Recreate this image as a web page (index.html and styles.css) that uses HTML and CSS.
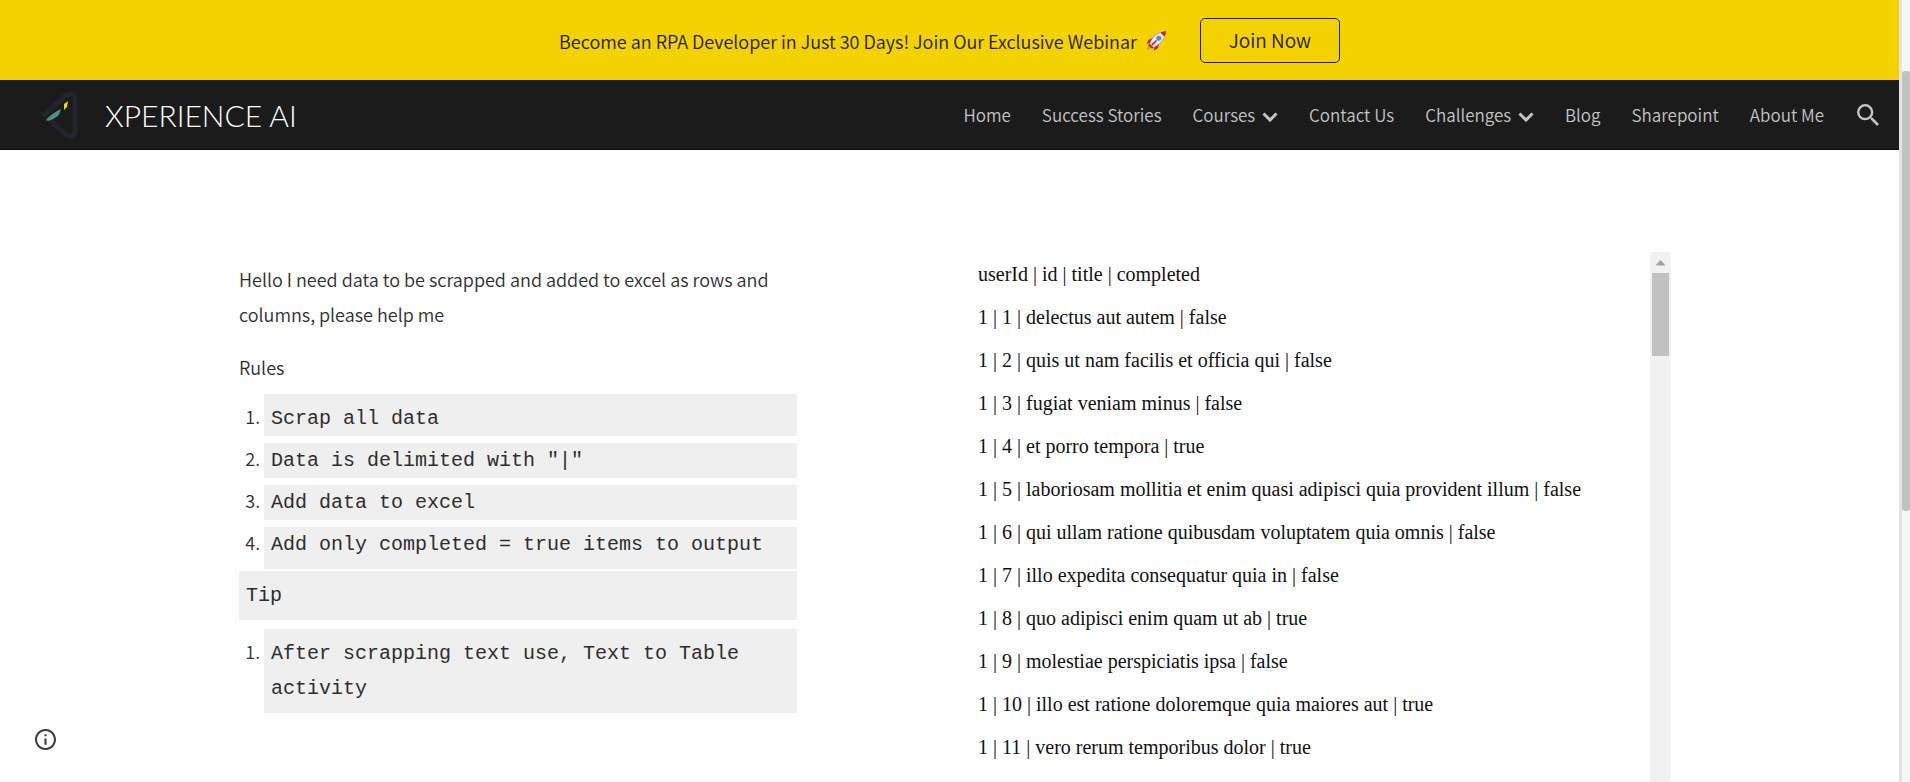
FILE: index.html
```html
<!DOCTYPE html>
<html lang="en">
<head>
<meta charset="utf-8">
<title>Xperience AI</title>
<link rel="stylesheet" href="styles.css">
</head>
<body>
<div class="page">
  <div class="banner">
    <p class="banner-text">Become an RPA Developer in Just 30 Days! Join Our Exclusive Webinar
      <svg class="rocket" viewBox="0 0 24 24" aria-hidden="true">
        <path fill="#d3193f" d="M10 8 4 10.500 1.500 15l5-1zM16 14l-2 6-4.500 2.500 1-5z"/>
        <path fill="#f08a1d" d="M5 15 1.500 22l7-3.500z"/>
        <path fill="#e8edf5" stroke="#8290a8" stroke-width=".7" d="M5 15C7 9 13 3 19 2.500l2.500 2.500C21 11 15 17 9 19z"/>
        <path fill="#d3193f" d="M17 3q3.500-1.800 6-2-.2 3-2 6z"/>
        <path fill="#c2184b" d="M4.500 14.500l5 5-2 .8L3.700 16.500z"/>
        <circle cx="15" cy="9" r="2.500" fill="#4f8fd0" stroke="#70809a" stroke-width=".7"/>
        <path stroke="#d3193f" stroke-width="1.800" stroke-linecap="round" d="m8 16 4-4"/>
      </svg>
    </p>
    <button class="join" type="button">Join Now</button>
  </div>

  <header class="header">
    <a class="brand" href="#">
      <svg class="logo" viewBox="-1 -1 44 52" aria-hidden="true">
        <path fill="none" stroke="#22252e" stroke-width="5" stroke-linejoin="round" d="M4 26 25 7Q35 0 36 9v32q-1 8-9 4L12 31"/>
        <path fill="#4d8f8f" d="M7 30q5-6 13-10l2-1-2 6q-6 5-11 6z"/>
        <path fill="#f2d51b" d="m25 14 4-3-1 6-3 3z"/>
      </svg>
      <span class="brand-name">XPERIENCE AI</span>
    </a>
    <nav class="nav">
      <a href="#">Home</a>
      <a href="#">Success Stories</a>
      <a href="#">Courses <svg class="chevron" viewBox="0 0 16 10" aria-hidden="true"><path d="m1.500 1.500 6.500 6.500 6.500-6.500"/></svg></a>
      <a href="#">Contact Us</a>
      <a href="#">Challenges <svg class="chevron" viewBox="0 0 16 10" aria-hidden="true"><path d="m1.500 1.500 6.500 6.500 6.500-6.500"/></svg></a>
      <a href="#">Blog</a>
      <a href="#">Sharepoint</a>
      <a href="#">About Me</a>
      <button class="search" type="button" aria-label="Search">
        <svg viewBox="3 3 17.500 17.500" aria-hidden="true"><path d="M15.500 14h-.79l-.28-.27A6.470 6.470 0 0 0 16 9.500 6.500 6.500 0 1 0 9.500 16c1.610 0 3.090-.59 4.230-1.570l.27.28v.79l5 4.990L20.490 19l-4.990-5zm-6 0C7.010 14 5 11.990 5 9.500S7.010 5 9.500 5 14 7.010 14 9.500 11.990 14 9.500 14z"/></svg>
      </button>
    </nav>
  </header>

  <main class="content">
    <section class="brief">
      <p>Hello I need data to be scrapped and added to excel as rows and columns, please help me</p>
      <p>Rules</p>
      <ol class="steps">
        <li><code>Scrap all data</code></li>
        <li><code>Data is delimited with "|"</code></li>
        <li><code>Add data to excel</code></li>
        <li><code>Add only completed = true items to output</code></li>
      </ol>
      <code class="tip">Tip</code>
      <ol class="steps">
        <li><code>After scrapping text use, Text to Table activity</code></li>
      </ol>
    </section>

    <section class="data">
      <div class="rows">
        <p>userId | id | title | completed</p>
        <p>1 | 1 | delectus aut autem | false</p>
        <p>1 | 2 | quis ut nam facilis et officia qui | false</p>
        <p>1 | 3 | fugiat veniam minus | false</p>
        <p>1 | 4 | et porro tempora | true</p>
        <p>1 | 5 | laboriosam mollitia et enim quasi adipisci quia provident illum | false</p>
        <p>1 | 6 | qui ullam ratione quibusdam voluptatem quia omnis | false</p>
        <p>1 | 7 | illo expedita consequatur quia in | false</p>
        <p>1 | 8 | quo adipisci enim quam ut ab | true</p>
        <p>1 | 9 | molestiae perspiciatis ipsa | false</p>
        <p>1 | 10 | illo est ratione doloremque quia maiores aut | true</p>
        <p>1 | 11 | vero rerum temporibus dolor | true</p>
      </div>
      <div class="data-scroll">
        <svg class="arrow" viewBox="0 0 21 21" aria-hidden="true"><path d="m10.500 8 5 5.500h-10z"/></svg>
        <div class="data-thumb"></div>
      </div>
    </section>
  </main>
</div>
<div class="page-scroll"><div class="page-thumb"></div></div>
<button class="info" type="button" aria-label="Site information">
  <svg viewBox="2 2 20 20" aria-hidden="true"><path d="M11 7h2v2h-2zm0 4h2v6h-2zm1-9C6.480 2 2 6.480 2 12s4.480 10 10 10 10-4.480 10-10S17.520 2 12 2zm0 18c-4.410 0-8-3.590-8-8s3.590-8 8-8 8 3.590 8 8-3.590 8-8 8z"/></svg>
</button>
</body>
</html>
```

FILE: styles.css
```css
* { box-sizing: border-box; }

body {
  margin: 0;
  display: flex;
  height: 100vh;
  overflow: hidden;
  background: #fff;
  color: #2e2e2e;
  font-family: "Noto Sans CJK SC", "Noto Sans", sans-serif;
  font-size: 18px;
  font-weight: 350;
}

p, ol { margin: 0; padding: 0; }
a { color: inherit; text-decoration: none; }
button { padding: 0; border: 0; background: none; font: inherit; color: inherit; }

.page {
  flex: 1;
  min-width: 0;
  display: flex;
  flex-direction: column;
}

.banner {
  flex: none;
  height: 80px;
  display: flex;
  align-items: center;
  justify-content: center;
  gap: 33px;
  background: #f4d200;
  color: #1c1a10;
}
.banner-text { padding-top: 2px; }
.rocket { width: 22px; height: 22px; margin-left: 4px; vertical-align: -3px; }
.join {
  width: 140px;
  height: 45px;
  padding-bottom: 2px;
  border: 1px solid #1c1a10;
  border-radius: 5px;
  font-size: 19px;
}

.header {
  flex: none;
  height: 70px;
  display: flex;
  align-items: center;
  justify-content: space-between;
  padding: 0 20px 0 38px;
  background: #1b1b1b;
  border-bottom: 1px solid #0b0b0b;
}
.brand { display: flex; align-items: center; gap: 23px; color: #fff; }
.logo { width: 44px; height: 52px; }
.brand-name { font-family: Lato, sans-serif; font-weight: 300; font-size: 30px; }
.nav {
  display: flex;
  align-items: center;
  gap: 31px;
  font-size: 17px;
  color: #c4c4c4;
}
.nav a { white-space: nowrap; }
.chevron {
  width: 16px;
  height: 10px;
  margin-left: 3px;
  fill: none;
  stroke: #c4c4c4;
  stroke-width: 3;
}
.search { padding-left: 2px; }
.search svg { display: block; width: 22px; height: 22px; fill: #c4c4c4; }

.content {
  flex: 1;
  min-height: 0;
  display: grid;
  grid-template-columns: 558px 703px;
  justify-content: center;
  gap: 171px;
  padding: 102px 0 0 11px;
}

.brief { padding-top: 10px; line-height: 35px; }
.brief p { margin-bottom: 18px; }
.brief p + p { margin-bottom: 9px; }
code {
  display: block;
  padding: 0 7px;
  background: #efefef;
  font-family: "Liberation Mono", monospace;
  font-size: 20px;
}
.steps { padding-left: 25px; }
.steps li { margin-bottom: 5px; }
.steps li:first-child code { padding-top: 7px; }
.steps li:last-child { margin-bottom: 2px; }
.steps li:last-child code { padding-bottom: 7px; }
.tip { margin-bottom: 9px; padding-top: 7px; padding-bottom: 7px; }

.data { display: flex; justify-content: space-between; min-height: 0; }
.rows {
  padding: 11px 0 0 10px;
  overflow: hidden;
  color: #111;
  font-family: "Liberation Serif", serif;
  font-weight: 400;
  font-size: 20px;
  line-height: 23px;
}
.rows p { margin-bottom: 20px; white-space: nowrap; }
.data-scroll { width: 21px; background: #f1f1f1; }
.arrow { display: block; width: 21px; height: 21px; fill: #a0a0a0; }
.data-thumb { height: 83px; margin: 0 2px; background: #c1c1c1; }

.page-scroll {
  flex: none;
  width: 11px;
  padding-top: 71px;
  background: #f6f6f6;
  border-left: 3px solid #e4e4e4;
}
.page-thumb { height: 440px; background: #c2c2c2; border-radius: 3px; }

.info { position: fixed; left: 35px; bottom: 32px; }
.info svg { display: block; width: 21px; height: 21px; fill: #3c3c3c; }
```
